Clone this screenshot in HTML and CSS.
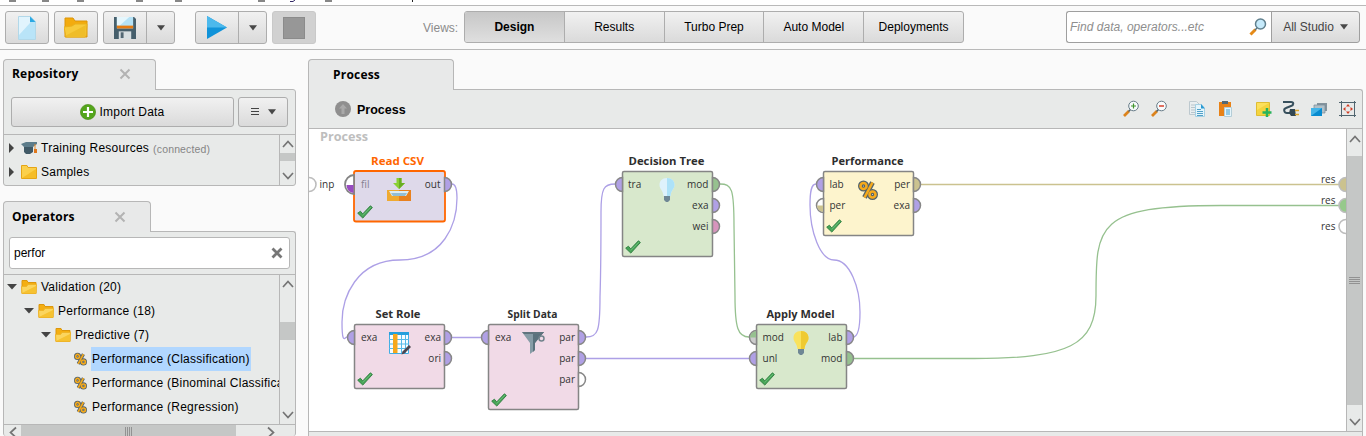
FILE: index.html
```html
<!DOCTYPE html>
<html lang="en">
<head>
<meta charset="utf-8">
<title>Process design</title>
<link rel="stylesheet" href="styles.css">
</head>
<body>
<svg class="defs" width="0" height="0">
  <defs>
    <symbol id="folder" viewBox="0 0 24 21"><path d="M1 1h8l2 3h12v16H1z" fill="#f3ab0e" stroke="#dc9508"/><path d="M0 10l8-1 3-2h12l-1 12-1 1H2z" fill="#f7ca3b" stroke="#e9b01d"/><path d="M1 19L22 8l-1 11z" fill="#efbd29"/></symbol>
    <symbol id="folder-s" viewBox="0 0 16 14"><path d="M1 .5h5l1 2h8v11H1z" fill="#f4ae11" stroke="#dc970c"/><path d="M.5 6.500h5l1.500-2h8.500l-.6 9H1z" fill="#fbd55e" stroke="#efb528"/><path d="M1 13L15 6v7z" fill="#f6c231"/></symbol>
    <symbol id="caret" viewBox="0 0 8 6"><path d="M0 .3h8L4 5.500z" fill="#484848"/></symbol>
    <symbol id="close" viewBox="0 0 12 12"><path d="M1.500 1.500l9 9m0-9l-9 9" stroke="#b3b3b3" stroke-width="2" fill="none"/></symbol>
    <symbol id="up" viewBox="0 0 12 8"><path d="M1 7l5-5.500L11 7" fill="none" stroke="#747474" stroke-width="1.700"/></symbol>
    <symbol id="down" viewBox="0 0 12 8"><path d="M1 1l5 5.500L11 1" fill="none" stroke="#747474" stroke-width="1.700"/></symbol>
    <symbol id="pct" viewBox="0 0 20 20"><g fill="none" stroke="#53636b" stroke-width="5"><circle cx="5.500" cy="6" r="3"/><circle cx="14.500" cy="14.500" r="3"/><path d="M14.500 2.500l-8 15"/></g><g fill="none" stroke="#f5aa1c" stroke-width="2.600"><path d="M14.500 2.500l-8 15"/><circle cx="5.500" cy="6" r="3"/><circle cx="14.500" cy="14.500" r="3"/></g></symbol>
    <symbol id="lens" viewBox="0 0 18 18"><path d="M1.500 16.500l5-5" stroke="#e58a17" stroke-width="3"/><path d="M6 12l2-2" stroke="#59717c" stroke-width="1.500"/><circle cx="11.500" cy="6" r="5" fill="#c6eafb" stroke="#61808e" stroke-width="1.500"/></symbol>
    <symbol id="check" viewBox="0 0 16 14"><path d="M.7 8.200l2.700-2 2.300 2.700L13.400.8l2 1.700L5.800 13.100z" fill="#47a457" stroke="#2d7d3e" stroke-width=".9"/><path d="M5.700 10.500L14 2" stroke="#77c784" stroke-width=".7"/></symbol>
    <symbol id="pr" viewBox="0 0 9 17" overflow="visible"><path d="M.5 1.500a7 7 0 0 1 0 14z" stroke="#878787" stroke-width="1.500"/></symbol>
    <symbol id="pl" viewBox="0 0 9 17" overflow="visible"><path d="M8.500 1.500a7 7 0 0 0 0 14z" stroke="#878787" stroke-width="1.500"/></symbol>
  </defs>
</svg>

<div class="menu-edge"><svg width="430" height="5"><path d="M9 1h7M42 1h7M77 1h7M136 1h7M175 1h7M258 1h7M325 1h7" stroke="#111" stroke-width="1.200"/><path d="M290 1.500h3l2-1.500" stroke="#332a66" fill="none"/><path d="M412.500 0v2" stroke="#222"/></svg></div>

<header class="toolbar">
  <div class="btn tool"><svg width="18" height="24" viewBox="0 0 18 24"><path d="M.5.5h12l5 5v18H.5z" fill="#b9e4f8" stroke="#b2d8e9"/><path d="M1 1h11v6L1 19z" fill="#e1f4fd"/><path d="M12 .5l5.500 5.500H12z" fill="#2ba8e2"/></svg></div>
  <div class="btn tool"><svg width="24" height="21"><use href="#folder"/></svg></div>
  <div class="btn split save"><span class="main"><svg width="22" height="22" viewBox="0 0 23 23"><path d="M0 0h21l2 2v21H0z" fill="#465f6c"/><path d="M3 0h17v12H3z" fill="#b5e2f6"/><path d="M3 0h13L6 9H3z" fill="#e5f6fc"/><path d="M3 9h17v3H3z" fill="#e67b12"/><path d="M5 15h13v8H5z" fill="#d7dfe2"/><path d="M7 16h3v6H7z" fill="#526874"/></svg></span><span class="drop"><svg width="8" height="6"><use href="#caret"/></svg></span></div>
  <div class="btn split run"><span class="main"><svg width="20" height="23" viewBox="0 0 20 23"><path d="M0 0v23l20-11.500z" fill="#1093d9"/><path d="M0 0l20 11.500H0z" fill="#4cb9ec"/></svg></span><span class="drop"><svg width="8" height="6"><use href="#caret"/></svg></span></div>
  <div class="stop"><i></i></div>
  <span class="views-label">Views:</span>
  <nav class="views"><b>Design</b><span>Results</span><span>Turbo Prep</span><span>Auto Model</span><span>Deployments</span></nav>
  <div class="find"><span class="find-text">Find data, operators...etc</span><svg width="18" height="18"><use href="#lens"/></svg></div>
  <div class="scope">All Studio<svg width="8" height="6"><use href="#caret"/></svg></div>
</header>

<main class="work">
  <aside class="side">
    <div class="tab t-repo"><b>Repository</b><svg width="12" height="12"><use href="#close"/></svg></div>
    <section class="panel repo">
      <div class="repo-bar">
        <div class="btn import"><svg width="16" height="16" viewBox="0 0 16 16"><circle cx="8" cy="8" r="7.600" fill="#54a51c" stroke="#43860f" stroke-width=".6"/><path d="M8 3v10M3 8h10" stroke="#fff" stroke-width="2.200"/></svg>Import Data</div>
        <div class="btn list"><svg width="8" height="8"><path d="M0 .5h8M0 3.500h8M0 6.500h8" stroke="#444"/></svg><svg width="8" height="6"><use href="#caret"/></svg></div>
      </div>
      <div class="body">
        <div class="tree">
          <div class="row"><svg class="tw" width="5" height="10"><path d="M0 0l5 5-5 5z" fill="#444"/></svg><svg class="ic" width="16" height="13" viewBox="0 0 16 13"><path d="M3 4h9v6l-3 2H5l-2-2z" fill="#405966"/><path d="M0 2l5-2h11v2l-4 3H3z" fill="#5d7d8b"/><path d="M14 2v6" stroke="#e58a2c"/><path d="M13 7h3v4h-3z" fill="#e0771b"/></svg><span>Training Resources</span><small>(connected)</small></div>
          <div class="row"><svg class="tw" width="5" height="10"><path d="M0 0l5 5-5 5z" fill="#444"/></svg><svg class="ic" width="16" height="14" viewBox="0 0 16 14"><path d="M.5.5H6l1 2h8.500v11H.5z" fill="#fbd04c" stroke="#e5a516"/><path d="M1 13L15 4v9z" fill="#f5bd28"/></svg><span>Samples</span></div>
        </div>
        <div class="vbar"><svg width="12" height="8"><use href="#up"/></svg><i></i><svg width="12" height="8"><use href="#down"/></svg></div>
      </div>
    </section>
    <div class="tab t-ops"><b>Operators</b><svg width="12" height="12"><use href="#close"/></svg></div>
    <section class="panel ops">
      <div class="filter"><span>perfor</span><svg width="12" height="12" viewBox="0 0 12 12"><path d="M1.500 1.500l9 9m0-9l-9 9" stroke="#777" stroke-width="2.800"/></svg></div>
      <div class="body">
        <div class="tree">
          <div class="row l0"><svg class="te" width="10" height="6"><path d="M0 0h10L5 5.500z" fill="#444"/></svg><svg class="ic" width="16" height="14"><use href="#folder-s"/></svg><span>Validation (20)</span></div>
          <div class="row l1"><svg class="te" width="10" height="6"><path d="M0 0h10L5 5.500z" fill="#444"/></svg><svg class="ic" width="16" height="14"><use href="#folder-s"/></svg><span>Performance (18)</span></div>
          <div class="row l2"><svg class="te" width="10" height="6"><path d="M0 0h10L5 5.500z" fill="#444"/></svg><svg class="ic" width="16" height="14"><use href="#folder-s"/></svg><span>Predictive (7)</span></div>
          <div class="row l3"><svg class="op" width="13" height="14"><use href="#pct"/></svg><span class="sel">Performance (Classification)</span></div>
          <div class="row l3"><svg class="op" width="13" height="14"><use href="#pct"/></svg><span>Performance (Binominal Classification)</span></div>
          <div class="row l3"><svg class="op" width="13" height="14"><use href="#pct"/></svg><span>Performance (Regression)</span></div>
        </div>
        <div class="vbar"><svg width="12" height="8"><use href="#up"/></svg><i></i><svg width="12" height="8"><use href="#down"/></svg></div>
      </div>
      <div class="hbar"><svg width="8" height="12"><path d="M7 1.500L1.500 6.500 7 11.500" fill="none" stroke="#747474" stroke-width="1.700"/></svg><i><svg width="8" height="10"><path d="M.5 0v10M2.500 0v10M4.500 0v10M6.500 0v10" stroke="#929292"/></svg></i><svg width="8" height="12"><path d="M1 1.500l5.500 5L1 11.500" fill="none" stroke="#747474" stroke-width="1.700"/></svg></div>
    </section>
  </aside>

  <section class="main-area">
    <div class="tab t-proc"><b>Process</b></div>
    <div class="panel proc">
      <div class="proc-head">
        <svg width="16" height="16" viewBox="0 0 16 16"><circle cx="8" cy="8" r="8" fill="#8f8f8f"/><path d="M8 3l4 4.500H9.500V13h-3V7.500H4z" fill="#a9a9a9"/></svg>
        <b>Process</b>
        <svg class="tools" width="236" height="18" viewBox="1122 100 236 18">
          <g><path d="M1125 116l5-5M1153 116l5-5" stroke="#dc831c" stroke-width="2.800"/><path d="M1129.500 111.500l2-2m26 2l2-2" stroke="#4f626b" stroke-width="1.500"/><g fill="#f8fbfc" stroke="#667b87"><circle cx="1134.500" cy="106" r="4.800"/><circle cx="1162.500" cy="106" r="4.800"/></g><path d="M1132 106h5m-2.500-2.500v5" stroke="#3f942c" stroke-width="1.200"/><path d="M1160 106h5" stroke="#d8422c" stroke-width="1.400"/></g>
          <path d="M1190.500 101.500h7l3 3v10h-10z" fill="#e9eef0" stroke="#bdc9cf"/><path d="M1192 105h5m-5 2.500h5m-5 2.500h5m-5 2.500h5" stroke="#b8c5cb"/><path d="M1196.500 104.500h6l3 4v8h-9z" fill="#e4f5fc" stroke="#a5d0e3"/><path d="M1202 104l4 4.500h-4z" fill="#2a9bd3"/><path d="M1198 109.500h4m-4 2h6m-6 2h6m-6 2h6" stroke="#52a1c8"/>
          <path d="M1220 102h12v14h-12z" fill="#e88217"/><path d="M1223 101h6v3h-6z" fill="#546974"/><path d="M1225.500 107.500h7v9h-7z" fill="#e5f5fb" stroke="#b4cdd7"/><path d="M1227 110h4m-4 2h4m-4 2h4" stroke="#45a0d1"/>
          <path d="M1257.500 102.500h13v13h-13z" fill="#fce05b" stroke="#dfbd32"/><path d="M1258 115v-5l12-7v12z" fill="#f4d43e"/><path d="M1268 108v9m-4.500-4.500h9" stroke="#28b35b" stroke-width="2.500"/>
          <path d="M1284 102h8c3 0 3 3 0 4l-5 2c-3 1-2 5 1 5h4" fill="none" stroke="#37505d" stroke-width="2"/><path d="M1291 109h5l1 7h-5l-2-3z" fill="#334853"/><path d="M1296 110.500h4m-4 4h4" stroke="#dda62c" stroke-width="1.500"/>
          <path d="M1318 103h10v8h-10z" fill="#84949d"/><path d="M1315 105h11v8h-11z" fill="#b1c0c8" stroke="#758b98" stroke-width=".7"/><path d="M1312 108h11v8h-11z" fill="#078bd0"/><path d="M1312 116v-8h11z" fill="#42b4e8"/>
          <path d="M1342.500 101v16m13-16v16m-15.500-14.500h17m-17 13h17" stroke="#50656f"/><path d="M1347 106.500l2-2.500 2 2.500zM1347 111.500l2 2.500 2-2.500zM1346.500 107l-2.500 2 2.500 2zM1351.500 107l2.500 2-2.500 2z" fill="#d13d24"/>
        </svg>
      </div>
      <div class="canvas-row">
        <svg class="canvas" width="1037" height="302" viewBox="309 129 1037 302">
          <text class="watermark" x="320" y="141" textLength="48" lengthAdjust="spacingAndGlyphs">Process</text>
          <g fill="none" stroke-width="1.300">
            <g stroke="#ada0e6">
              <path d="M452 184c4 0 5 6 5 14 0 26-13 62-57 62s-58 38-58 62 3 15 5 15"/>
              <path d="M452 337.500h30M586 358.500h163"/>
              <path d="M586 337c12 0 14-6 14-40 1-30 1-60 1-85 0-24 3-28 14-28"/>
              <path d="M816 184c-5 0-6 8-6 21 0 26 10 55 24 55 16 0 26 28 26 52 0 20-3 25-7 25"/>
            </g>
            <g stroke="#96c18f">
              <path d="M720 184c12 0 14 5 14 42l1 70c0 32 3 41 14 41"/>
              <path d="M854 358.500h120c95 0 122-13 122-63 0-70 0-90 125-90h118"/>
            </g>
            <path d="M921 184.500h418" stroke="#cbc28f" stroke-width="1.600"/>
          </g>
          <g stroke="#858585" stroke-width="1.500">
            <rect x="354" y="171" width="91" height="50.500" rx="2" fill="#ded9ea" stroke="#ff6600" stroke-width="1.800"/>
            <rect x="622.500" y="171.500" width="90" height="85" rx="1.500" fill="#d8e8cc"/>
            <rect x="823.500" y="171.500" width="90" height="64" rx="1.500" fill="#fdf4cd"/>
            <rect x="354.500" y="324.500" width="90" height="64" rx="1.500" fill="#f1dae7"/>
            <rect x="488.500" y="324.500" width="90" height="85" rx="1.500" fill="#f1dae7"/>
            <rect x="756.500" y="324.500" width="90" height="64" rx="1.500" fill="#d8e8cc"/>
          </g>
          <g fill="#b0a0e5">
            <use href="#pr" x="444" y="176" width="9" height="17"/><use href="#pr" x="444" y="329" width="9" height="17"/><use href="#pr" x="444" y="350" width="9" height="17"/>
            <use href="#pr" x="578" y="329" width="9" height="17"/><use href="#pr" x="578" y="350" width="9" height="17"/><use href="#pr" x="712" y="197" width="9" height="17"/>
            <use href="#pr" x="846" y="329" width="9" height="17"/><use href="#pr" x="913" y="197" width="9" height="17"/>
            <use href="#pl" x="346" y="329" width="9" height="17"/><use href="#pl" x="480" y="329" width="9" height="17"/><use href="#pl" x="614" y="176" width="9" height="17"/><use href="#pl" x="748" y="350" width="9" height="17"/><use href="#pl" x="815" y="176" width="9" height="17"/>
          </g>
          <g fill="#96c18f"><use href="#pr" x="712" y="176" width="9" height="17"/><use href="#pr" x="846" y="350" width="9" height="17"/></g>
          <use href="#pr" x="712" y="218" width="9" height="17" fill="#d795bd"/>
          <use href="#pr" x="913" y="176" width="9" height="17" fill="#cbc28f"/>
          <use href="#pr" x="578" y="371" width="9" height="17" fill="#fff"/>
          <use href="#pl" x="748" y="329" width="9" height="17" fill="#ccc"/><path d="M750 337.500a6.500 6.500 0 0 1 6-6.300v6.300z" fill="#96c18f"/>
          <use href="#pl" x="815" y="197" width="9" height="17" fill="#fff"/><path d="M817 205.500a6.500 6.500 0 0 0 6 6.300v-6.300z" fill="#cbc28f"/>
          <path d="M354 175a9 9.500 0 0 0 0 19z" fill="#fff" stroke="#858585" stroke-width="1.800"/><path d="M346.500 185a7.500 8 0 0 0 7 8v-8z" fill="#984bc0"/>
          <g stroke="#bdbdbd" stroke-width="1.600"><circle cx="309" cy="184.500" r="7" fill="#fff"/><circle cx="1346" cy="184.500" r="7" fill="#cbc28f"/><circle cx="1346" cy="205.500" r="7" fill="#96c98b"/><circle cx="1346" cy="226.500" r="7" fill="#fff"/></g>

          <g class="node-title" text-anchor="middle">
            <text x="397.500" y="165" textLength="53" lengthAdjust="spacingAndGlyphs" class="active">Read CSV</text><text x="666.500" y="165" textLength="76" lengthAdjust="spacingAndGlyphs">Decision Tree</text><text x="867.500" y="165" textLength="72" lengthAdjust="spacingAndGlyphs">Performance</text>
            <text x="398" y="318" textLength="45" lengthAdjust="spacingAndGlyphs">Set Role</text><text x="532.500" y="318" textLength="50" lengthAdjust="spacingAndGlyphs">Split Data</text><text x="800.500" y="318" textLength="68" lengthAdjust="spacingAndGlyphs">Apply Model</text>
          </g>
          <g class="port">
            <text x="319.500" y="188">inp</text><text x="361" y="188" class="dim">fil</text><text x="628" y="188">tra</text><text x="829.500" y="188">lab</text><text x="829.500" y="209">per</text><text x="361" y="341">exa</text><text x="495" y="341">exa</text><text x="762.500" y="341">mod</text><text x="762.500" y="362">unl</text>
          </g>
          <g class="port" text-anchor="end">
            <text x="440.500" y="188">out</text><text x="708.500" y="188">mod</text><text x="708.500" y="209">exa</text><text x="708.500" y="230">wei</text><text x="910" y="188">per</text><text x="910" y="209">exa</text><text x="441" y="341">exa</text><text x="441" y="362">ori</text><text x="575" y="341">par</text><text x="575" y="362">par</text><text x="575" y="383">par</text><text x="842.500" y="341">lab</text><text x="842.500" y="362">mod</text><text x="1335.500" y="183">res</text><text x="1335.500" y="204">res</text><text x="1335.500" y="230">res</text>
          </g>
          <use href="#check" x="357" y="205" width="16" height="14"/><use href="#check" x="625" y="240" width="16" height="14"/><use href="#check" x="826" y="219" width="16" height="14"/><use href="#check" x="357" y="372" width="16" height="14"/><use href="#check" x="491" y="393" width="16" height="14"/><use href="#check" x="759" y="372" width="16" height="14"/>
          <path d="M387 190h24v11h-24z" fill="#efaa31"/><path d="M399 190h12v11h-12z" fill="#e8811f"/><path d="M389 191h20l-3 5h-14z" fill="#dcedf3"/><path d="M391 193h16l-2 3h-12z" fill="#92bed5"/><path d="M396.500 178h5v5h3.500l-6 6-6-6h3.500z" fill="#8ad033"/><path d="M399 178h2.500v5h3.500l-6 6z" fill="#68ae22"/>
          <g><path d="M667 178c-5 0-7.500 3-7.500 7 0 4 3.500 5 4 11h7c.5-6 4-7 4-11 0-4-2.500-7-7.500-7z" fill="#def2fc"/><path d="M667 178c5 0 7.500 3 7.500 7 0 4-3.500 5-4 11H667z" fill="#ade2f8"/><path d="M664 196h6v4l-2 2h-2l-2-2z" fill="#6f8795"/></g>
          <g><path d="M801 331c-5 0-7.500 3-7.500 7 0 4 3.500 5 4 11h7c.5-6 4-7 4-11 0-4-2.500-7-7.500-7z" fill="#f9e25c"/><path d="M801 331c5 0 7.500 3 7.500 7 0 4-3.500 5-4 11H801z" fill="#efca32"/><path d="M798 349h6v4l-2 2h-2l-2-2z" fill="#6f8795"/></g>
          <use href="#pct" x="858" y="180" width="20" height="20"/>
          <path d="M389.500 332.500h19v21h-19z" fill="#f7fcff" stroke="#42aee4"/><path d="M389 332h20v3h-20z" fill="#269fdd"/><path d="M389 339.500h20m-20 4.500h20m-20 4.500h20M401.500 335v18m4-18v18" stroke="#55b9e8"/><path d="M393 334h4.500v19H393z" fill="#f6a71c"/><path d="M401.500 354.500l1-3 6.500-6.500 2 2-6.500 6.500z" fill="#4d4650"/>
          <path d="M522 332h22l-9 11v7l-5 4v-11z" fill="#879ca6"/><path d="M533 332h11l-9 11v7l-2 2z" fill="#5b727d"/><path d="M522 332h22l-2 2h-18z" fill="#60747e"/><circle cx="541.500" cy="338.500" r="2.500" fill="none" stroke="#71838c" stroke-width="1.500"/>
        </svg>
        <div class="vbar big"><svg width="12" height="8"><use href="#up"/></svg><i><svg width="11" height="8"><path d="M0 .5h11M0 2.500h11M0 4.500h11M0 6.500h11" stroke="#929292"/></svg></i><svg width="12" height="8"><use href="#down"/></svg></div>
      </div>
    </div>
  </section>
</main>
</body>
</html>
```
FILE: styles.css
```css
* { box-sizing: border-box; }
body { margin: 0; width: 1366px; height: 436px; overflow: hidden; display: flex; flex-direction: column; background: #fafafa; color: #000; font: 12px "Liberation Sans", Arial, sans-serif; }
svg { display: block; flex: none; }
.defs { position: absolute; }
.menu-edge { height: 5px; background: #fff; flex: none; }

.toolbar { display: flex; align-items: flex-start; height: 45px; flex: none; padding: 5px 5px 0; border: solid #b9b9b9; border-width: 1px 0; }
.btn { display: flex; align-items: center; justify-content: center; border: 1px solid #adadad; border-radius: 3px; background: linear-gradient(#f1f1f1, #dadada); }
.tool { width: 44px; height: 33px; margin-right: 5px; }
.split { width: 72px; height: 33px; align-items: stretch; }
.split span { display: flex; align-items: center; justify-content: center; }
.main { flex: 1; border-right: 1px solid #adadad; }
.split .drop { width: 27px; }
.run { margin: 0 5px 0 20px; }
.stop { width: 44px; height: 33px; display: flex; align-items: center; justify-content: center; background: #d1d1d1; border: 1px solid #c9c9c9; border-radius: 3px; }
.stop i { width: 22px; height: 22px; background: #979797; border: 1px solid #8b8b8b; }
.views-label { width: 41px; margin: 10px 0 0 107px; color: #8b8b8b; font-size: 12px; }
.views { display: flex; height: 32px; width: 500px; border: 1px solid #adadad; border-radius: 3px; background: linear-gradient(#f1f1f1, #dadada); overflow: hidden; line-height: 30px; text-align: center; font-size: 12px; }
.views > * { width: 100px; border-left: 1px solid #adadad; }
.views b { width: 99px; border-left: 0; background: linear-gradient(#c7c7c7, #dfdfdf); }
.find { width: 206px; height: 32px; margin-left: 102px; display: flex; align-items: center; justify-content: space-between; padding: 0 5px 0 3px; background: #fff; border: 1px solid #9f9f9f; border-right: 0; border-radius: 3px 0 0 3px; }
.find-text { font-style: italic; color: #8e8e8e; letter-spacing: .02px; }
.scope { width: 89px; height: 32px; margin-left: -1px; display: flex; align-items: center; justify-content: center; gap: 6px; color: #444; border: 1px solid #9f9f9f; border-radius: 0 3px 3px 0; background: linear-gradient(#f1f1f1, #dadada); }

.work { display: flex; flex: 1; min-height: 0; padding: 9px 3px 0; gap: 12px; }
.side { width: 293px; display: flex; flex-direction: column; }
.tab { position: relative; z-index: 1; height: 31px; flex: none; display: flex; align-items: center; justify-content: space-between; padding: 0 0 1px 8px; border: 1px solid #b7b7b7; border-bottom: 0; border-radius: 4px 4px 0 0; background: #e8e9e9; font: 12px "Open Sans", sans-serif; }
.tab b { letter-spacing: .2px; margin-top: -1px; }
.panel { margin-top: -1px; border: 1px solid #b7b7b7; border-radius: 0 3px 3px 3px; background: #e8eae9; display: flex; flex-direction: column; overflow: hidden; }
.t-repo { width: 153px; padding-right: 24px; padding-bottom: 2px; }
.t-ops { width: 148px; margin-top: 15px; padding-right: 24px; padding-bottom: 1px; }
.t-proc { width: 146px; padding-left: 24px; }
.repo { height: 97px; flex: none; }
.repo-bar { height: 45px; flex: none; display: flex; gap: 4px; padding: 7px; border-bottom: 1px solid #b7b7b7; }
.import { width: 223px; height: 30px; gap: 4px; letter-spacing: .2px; padding-right: 1px; }
.list { width: 50px; height: 30px; gap: 9px; }
.body { display: flex; flex: 1; min-height: 0; }
.tree { flex: 1; min-width: 0; overflow: hidden; letter-spacing: .25px; }
.repo .tree { padding-top: 1px; }
.row { height: 24px; display: flex; align-items: center; white-space: nowrap; padding-left: 5px; }
.tw { margin-right: 7px; }
.te { margin-right: 4px; }
.ic { margin-right: 4px; }
.row small { margin: 1px 0 0 4px; font-size: 10.5px; letter-spacing: .15px; color: #858585; }
.l0 { padding-left: 3px; }
.l1 { padding-left: 20px; }
.l2 { padding-left: 37px; }
.l3 { padding-left: 70px; }
.op { margin-right: 5px; }
.row .sel { margin-left: -1px; padding: 0 1px; }
.sel { background: #b1d7ff; height: 24px; line-height: 24px; }
.vbar { width: 16px; flex: none; border-left: 1px solid #b7b7b7; display: flex; flex-direction: column; justify-content: space-between; align-items: center; padding: 5px 0; }
.vbar i { background: #c5c7c6; width: 15px; }
.repo .vbar i { height: 8px; margin-bottom: 6px; }
.ops { flex: 1; min-height: 0; border-bottom: 0; }
.filter { height: 32px; margin: 5px 5px 5px; flex: none; display: flex; align-items: center; justify-content: space-between; padding: 0 6px 0 4px; border: 1px solid #b7b7b7; border-radius: 3px; background: #fff; }
.ops .body { height: 151px; flex: none; border: solid #b7b7b7; border-width: 1px 0; }
.ops .vbar i { height: 18px; margin-bottom: 37px; }
.hbar { height: 16px; flex: none; margin-right: 16px; display: flex; align-items: flex-start; padding: 1px 4px 0 5px; }
.hbar i { width: 215px; height: 14px; margin: -1px 31px 0 4px; background: #c5c7c6; display: flex; justify-content: center; padding-top: 2px; }

.main-area { flex: 1; min-width: 0; display: flex; flex-direction: column; }
.proc { width: 1055px; flex: 1; min-height: 0; border-bottom: 0; border-radius: 0 3px 0 0; }
.proc-head { height: 39px; flex: none; display: flex; align-items: center; padding: 0 5px 0 26px; gap: 6px; border-bottom: 1px solid #b7b7b7; font-size: 12.5px; }
.proc-head b { padding-top: 1px; }
.tools { margin-left: auto; }
.canvas-row { display: flex; height: 303px; flex: none; border-bottom: 1px solid #b7b7b7; background: #fff; }
.canvas { background: #fff; }
.big { padding: 6px 0 5px; background: #e8eae9; }
.big i { height: 249px; display: flex; align-items: center; justify-content: center; }
.watermark { font: bold 11.5px "Open Sans", sans-serif; fill: #bebebe; }
.node-title { font: bold 11px "Open Sans", sans-serif; fill: #2e2e2e; }
.node-title .active { fill: #ff6600; }
.port { font: 10px "Open Sans", sans-serif; fill: #333; }
.port .dim { fill: #858090; }
```
